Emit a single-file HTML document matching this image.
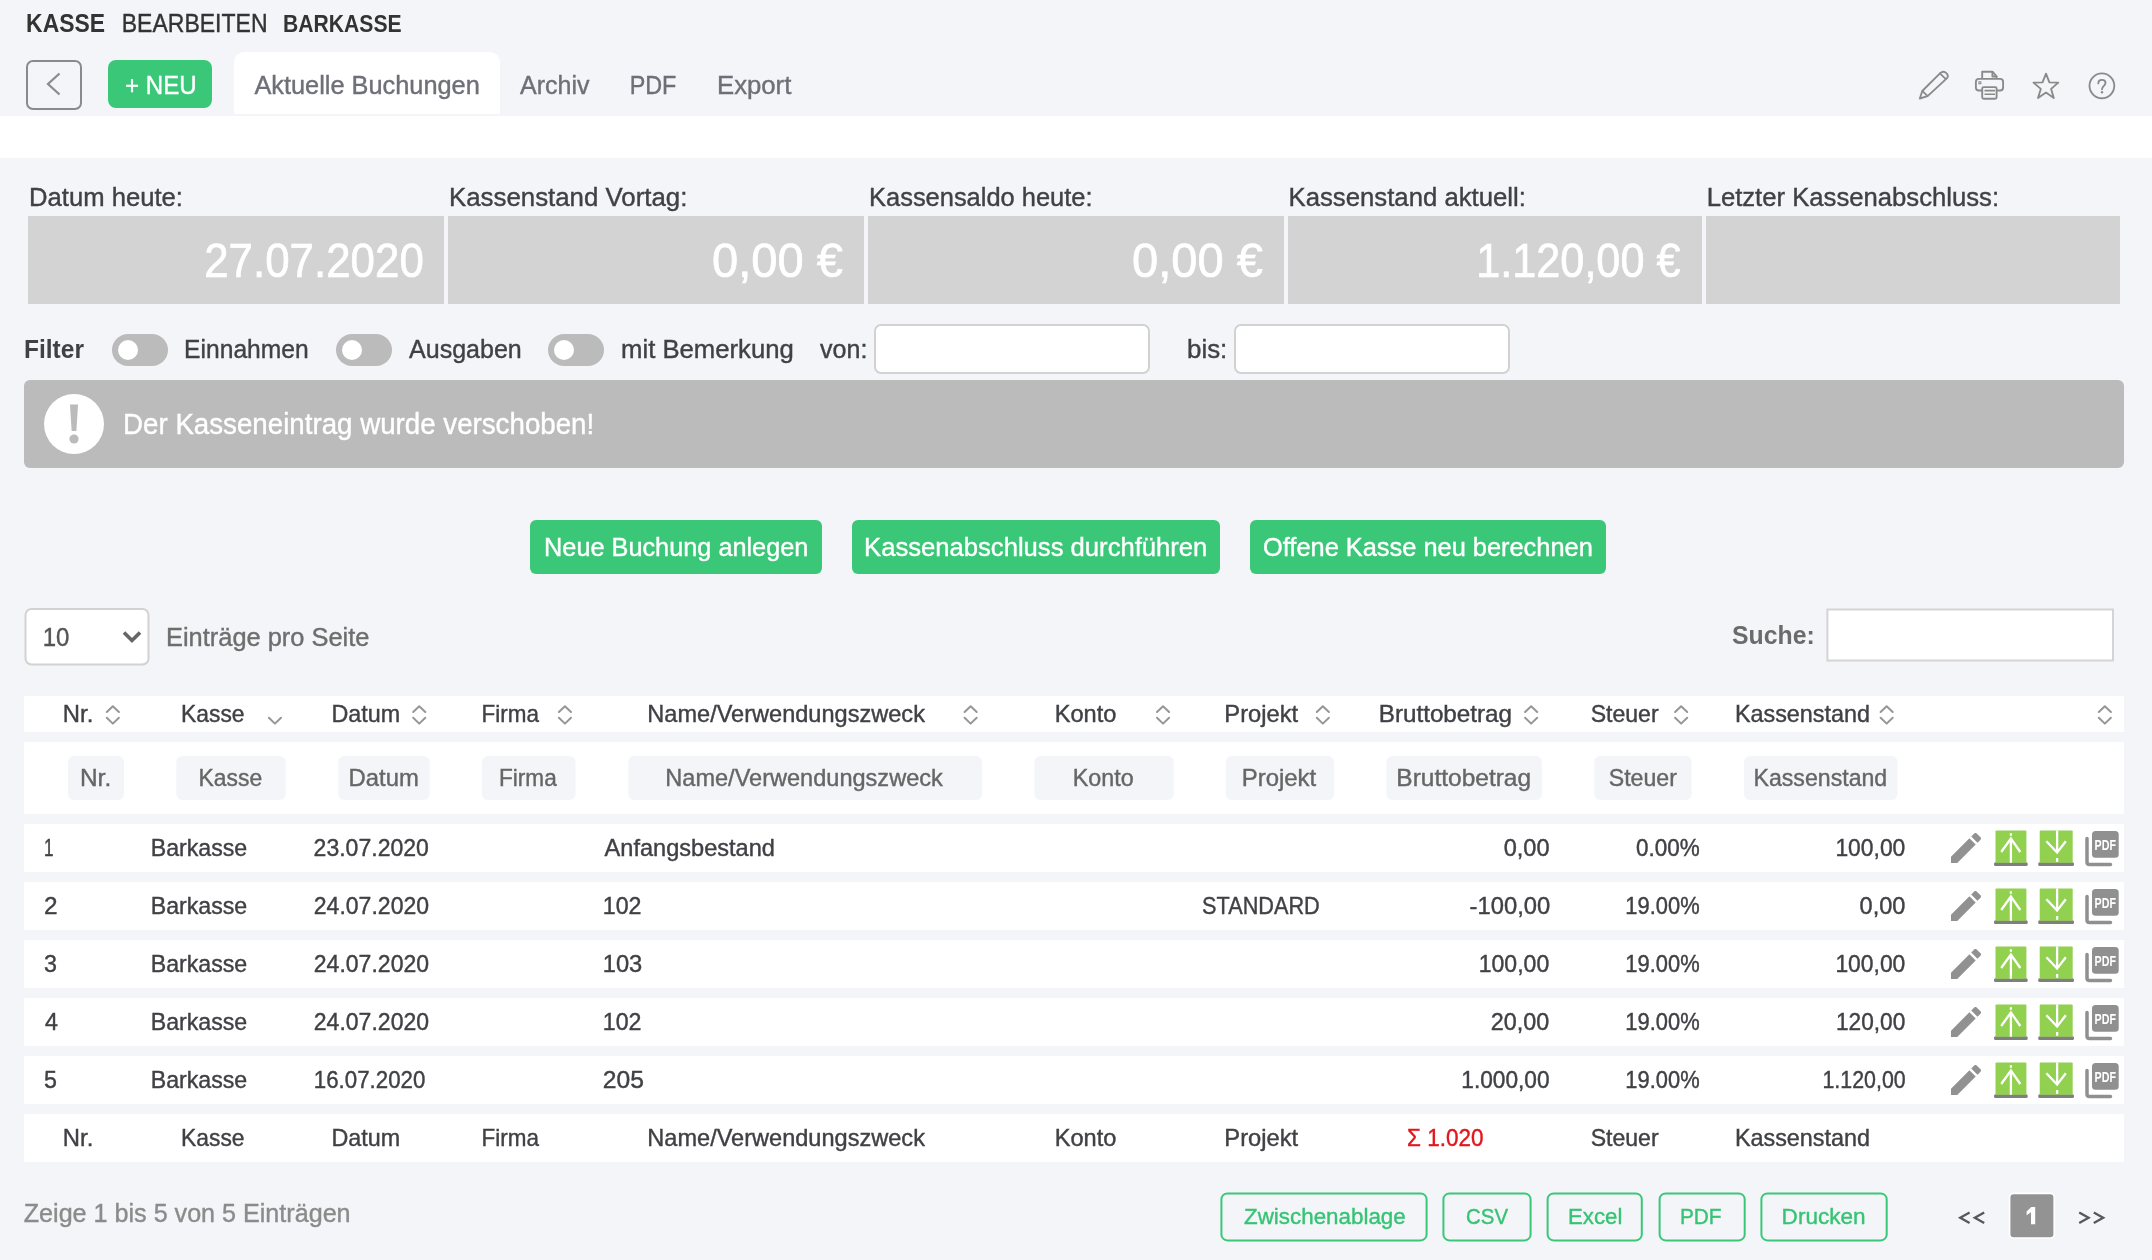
<!DOCTYPE html>
<html lang="de"><head><meta charset="utf-8"><title>Kasse bearbeiten – Barkasse</title>
<style>
html,body{margin:0;padding:0;background:#f4f5f9;overflow:hidden;}
body{font-family:"Liberation Sans",sans-serif;}
svg{display:block;width:100vw;height:auto;will-change:transform;font-family:"Liberation Sans",sans-serif;}
</style></head><body>
<svg viewBox="0 0 2152 1260" preserveAspectRatio="xMinYMin meet">
<defs><filter id="bl" x="-20%" y="-20%" width="140%" height="140%"><feGaussianBlur stdDeviation="0.55"/></filter><filter id="bl2" x="-20%" y="-20%" width="140%" height="140%"><feGaussianBlur stdDeviation="0.4"/></filter></defs>
<rect x="0" y="0" width="2152" height="1260" fill="#f4f5f9"/>
<rect x="0" y="116" width="2152" height="42" rx="0" fill="#fff" />
<path d="M234,114 V64 Q234,52 246,52 H488 Q500,52 500,64 V114 Z" fill="#fff"/>
<rect x="27" y="61" width="54" height="48" rx="6" fill="none" stroke="#8a8a8a" stroke-width="2"/>
<polyline points="59.5,73.5 48,84 59.5,94.5" fill="none" stroke="#8a8a8a" stroke-width="2.2"/>
<rect x="108" y="60" width="104" height="48" rx="8" fill="#3ac878" />
<text x="26.12" y="32" font-weight="bold" font-size="26.16" textLength="78.99" lengthAdjust="spacingAndGlyphs" fill="#333333">KASSE</text>
<text x="121.74" y="32" font-weight="normal" font-size="26.16" textLength="145.76" lengthAdjust="spacingAndGlyphs" fill="#333333" stroke="#333333" stroke-width="0.4">BEARBEITEN</text>
<text x="283.11" y="32" font-weight="bold" font-size="23.84" textLength="118.54" lengthAdjust="spacingAndGlyphs" fill="#333333">BARKASSE</text>
<text x="125.08" y="94" font-weight="normal" font-size="26.16" textLength="71.56" lengthAdjust="spacingAndGlyphs" fill="#ffffff" stroke="#ffffff" stroke-width="0.4">+ NEU</text>
<text x="254.4" y="94" font-weight="normal" font-size="25.73" textLength="225.38" lengthAdjust="spacingAndGlyphs" fill="#6f6f78" stroke="#6f6f78" stroke-width="0.4">Aktuelle Buchungen</text>
<text x="520.0" y="94" font-weight="normal" font-size="25.73" textLength="69.48" lengthAdjust="spacingAndGlyphs" fill="#6f6f78" stroke="#6f6f78" stroke-width="0.4">Archiv</text>
<text x="629.68" y="94" font-weight="normal" font-size="25.73" textLength="46.71" lengthAdjust="spacingAndGlyphs" fill="#6f6f78" stroke="#6f6f78" stroke-width="0.4">PDF</text>
<text x="717.0" y="94" font-weight="normal" font-size="25.73" textLength="74.34" lengthAdjust="spacingAndGlyphs" fill="#6f6f78" stroke="#6f6f78" stroke-width="0.4">Export</text>
<g fill="none" stroke="#8a8a8a" stroke-width="1.85" stroke-linejoin="round" stroke-linecap="round">
<path d="M1919.8,98.5 L1922.3,91 L1940.2,73.1 Q1943.5,70.2 1946.6,73.3 Q1949.4,76.4 1946,79.1 L1927.6,96.1 Z"/>
<path d="M1939.9,73.4 L1945.6,78.8 M1922.5,91.2 L1927.4,95.9"/>
<path d="M1982.2,77.5 V71.7 H1992.5 L1996.6,76.4 V77.5"/>
<path d="M1992.4,71.9 V76.5 H1996.4"/>
<rect x="1975.9" y="78.9" width="27.2" height="11.6" rx="3"/>
</g>
<rect x="1982.2" y="87.1" width="14.4" height="11.6" rx="1.5" fill="#f4f5f9" stroke="#8a8a8a" stroke-width="1.85"/>
<rect x="1978.9" y="81.8" width="2" height="2" fill="none" stroke="#8a8a8a" stroke-width="1"/>
<path d="M1984.5,90.6 H1995 M1984.5,94.2 H1995" stroke="#8a8a8a" stroke-width="1.6"/>
<g fill="none" stroke="#8a8a8a" stroke-width="1.85" stroke-linejoin="round" stroke-linecap="round">
<path d="M2046,73.6 L2049.4,82.3 L2058.3,82.6 L2051.1,88.9 L2053.8,98 L2046,92.6 L2038,98 L2040.8,88.9 L2033.5,82.6 L2042.5,82.3 Z"/>
<circle cx="2101.9" cy="85.8" r="12.4"/>
<path d="M2098.3,83.4 C2098.3,81.1 2100,79.9 2102,79.9 C2104.1,79.9 2105.5,81.3 2105.5,83.1 C2105.5,85.6 2102,86.2 2102,89.2"/>
</g>
<circle cx="2102" cy="92.3" r="1.2" fill="#8a8a8a"/>
<rect x="28" y="216" width="416" height="88" rx="0" fill="#d3d3d3" />
<rect x="448" y="216" width="416" height="88" rx="0" fill="#d3d3d3" />
<rect x="868" y="216" width="416" height="88" rx="0" fill="#d3d3d3" />
<rect x="1288" y="216" width="414" height="88" rx="0" fill="#d3d3d3" />
<rect x="1706" y="216" width="414" height="88" rx="0" fill="#d3d3d3" />
<text x="29.04" y="206" font-weight="normal" font-size="26.16" textLength="153.95" lengthAdjust="spacingAndGlyphs" fill="#404145" stroke="#404145" stroke-width="0.4">Datum heute:</text>
<text x="449.03" y="206" font-weight="normal" font-size="26.16" textLength="238.34" lengthAdjust="spacingAndGlyphs" fill="#404145" stroke="#404145" stroke-width="0.4">Kassenstand Vortag:</text>
<text x="869.05" y="206" font-weight="normal" font-size="26.16" textLength="223.46" lengthAdjust="spacingAndGlyphs" fill="#404145" stroke="#404145" stroke-width="0.4">Kassensaldo heute:</text>
<text x="1288.53" y="206" font-weight="normal" font-size="26.16" textLength="237.4" lengthAdjust="spacingAndGlyphs" fill="#404145" stroke="#404145" stroke-width="0.4">Kassenstand aktuell:</text>
<text x="1706.64" y="206" font-weight="normal" font-size="26.16" textLength="292.39" lengthAdjust="spacingAndGlyphs" fill="#404145" stroke="#404145" stroke-width="0.4">Letzter Kassenabschluss:</text>
<text x="204.19" y="277" font-weight="normal" font-size="48.55" textLength="219.6" lengthAdjust="spacingAndGlyphs" fill="#ffffff" stroke="#ffffff" stroke-width="0.7">27.07.2020</text>
<text x="712.06" y="277" font-weight="normal" font-size="48.55" textLength="130.89" lengthAdjust="spacingAndGlyphs" fill="#ffffff" stroke="#ffffff" stroke-width="0.7">0,00 €</text>
<text x="1132.06" y="277" font-weight="normal" font-size="48.55" textLength="130.89" lengthAdjust="spacingAndGlyphs" fill="#ffffff" stroke="#ffffff" stroke-width="0.7">0,00 €</text>
<text x="1476.33" y="277" font-weight="normal" font-size="48.55" textLength="204.09" lengthAdjust="spacingAndGlyphs" fill="#ffffff" stroke="#ffffff" stroke-width="0.7">1.120,00 €</text>
<rect x="112" y="334" width="56" height="32" rx="16" fill="#bbbbbb" />
<circle cx="128" cy="350" r="10" fill="#fff"/>
<rect x="336" y="334" width="56" height="32" rx="16" fill="#bbbbbb" />
<circle cx="352" cy="350" r="10" fill="#fff"/>
<rect x="548" y="334" width="56" height="32" rx="16" fill="#bbbbbb" />
<circle cx="564" cy="350" r="10" fill="#fff"/>
<text x="24.06" y="358" font-weight="bold" font-size="26.16" textLength="59.89" lengthAdjust="spacingAndGlyphs" fill="#404145">Filter</text>
<text x="184.12" y="358" font-weight="normal" font-size="26.16" textLength="124.63" lengthAdjust="spacingAndGlyphs" fill="#404145" stroke="#404145" stroke-width="0.4">Einnahmen</text>
<text x="409.0" y="358" font-weight="normal" font-size="26.16" textLength="112.78" lengthAdjust="spacingAndGlyphs" fill="#404145" stroke="#404145" stroke-width="0.4">Ausgaben</text>
<text x="621.02" y="358" font-weight="normal" font-size="26.16" textLength="172.84" lengthAdjust="spacingAndGlyphs" fill="#404145" stroke="#404145" stroke-width="0.4">mit Bemerkung</text>
<text x="820.0" y="358" font-weight="normal" font-size="26.16" textLength="47.39" lengthAdjust="spacingAndGlyphs" fill="#404145" stroke="#404145" stroke-width="0.4">von:</text>
<text x="1187.01" y="358" font-weight="normal" font-size="26.16" textLength="40.27" lengthAdjust="spacingAndGlyphs" fill="#404145" stroke="#404145" stroke-width="0.4">bis:</text>
<rect x="875" y="325" width="274" height="48" rx="6" fill="#fff" stroke="#d2d2d2" stroke-width="2"/>
<rect x="1235" y="325" width="274" height="48" rx="6" fill="#fff" stroke="#d2d2d2" stroke-width="2"/>
<rect x="24" y="380" width="2100" height="88" rx="6" fill="#bbbbbb" />
<circle cx="74" cy="424" r="30" fill="#fff"/>
<path d="M70,404.5 H78 L76.4,431 H71.6 Z" fill="#bbbbbb"/>
<circle cx="74" cy="439" r="4.6" fill="#bbbbbb"/>
<text x="123.07" y="434" font-weight="normal" font-size="28.78" textLength="471.14" lengthAdjust="spacingAndGlyphs" fill="#ffffff" stroke="#ffffff" stroke-width="0.4">Der Kasseneintrag wurde verschoben!</text>
<rect x="530" y="520" width="292" height="54" rx="6" fill="#3ac878" />
<rect x="852" y="520" width="368" height="54" rx="6" fill="#3ac878" />
<rect x="1250" y="520" width="356" height="54" rx="6" fill="#3ac878" />
<text x="544.07" y="556" font-weight="normal" font-size="26.16" textLength="264.31" lengthAdjust="spacingAndGlyphs" fill="#ffffff" stroke="#ffffff" stroke-width="0.4">Neue Buchung anlegen</text>
<text x="864.04" y="556" font-weight="normal" font-size="26.16" textLength="343.35" lengthAdjust="spacingAndGlyphs" fill="#ffffff" stroke="#ffffff" stroke-width="0.4">Kassenabschluss durchführen</text>
<text x="1263.03" y="556" font-weight="normal" font-size="26.16" textLength="329.76" lengthAdjust="spacingAndGlyphs" fill="#ffffff" stroke="#ffffff" stroke-width="0.4">Offene Kasse neu berechnen</text>
<rect x="25.5" y="609" width="123" height="55.5" rx="6" fill="#fff" stroke="#d2d2d2" stroke-width="2"/>
<polyline points="124,632.5 132,640.5 140,632.5" fill="none" stroke="#666" stroke-width="3.6"/>
<text x="42.72" y="646" font-weight="normal" font-size="25.58" textLength="26.7" lengthAdjust="spacingAndGlyphs" fill="#555555" stroke="#555555" stroke-width="0.4">10</text>
<text x="166.01" y="646" font-weight="normal" font-size="25.58" textLength="203.43" lengthAdjust="spacingAndGlyphs" fill="#6e6e6e" stroke="#6e6e6e" stroke-width="0.4">Einträge pro Seite</text>
<text x="1732.02" y="644" font-weight="bold" font-size="25.44" textLength="82.74" lengthAdjust="spacingAndGlyphs" fill="#6b6b6b">Suche:</text>
<rect x="1827.4" y="609.5" width="285.6" height="51" fill="#fff" stroke="#d4d4d4" stroke-width="2"/>
<rect x="24" y="696" width="2100" height="36" rx="0" fill="#fff" />
<rect x="24" y="742" width="2100" height="72" rx="0" fill="#fff" />
<rect x="24" y="824" width="2100" height="48" rx="0" fill="#fff" />
<rect x="24" y="882" width="2100" height="48" rx="0" fill="#fff" />
<rect x="24" y="940" width="2100" height="48" rx="0" fill="#fff" />
<rect x="24" y="998" width="2100" height="48" rx="0" fill="#fff" />
<rect x="24" y="1056" width="2100" height="48" rx="0" fill="#fff" />
<rect x="24" y="1114" width="2100" height="48" rx="0" fill="#fff" />
<text x="62.86" y="722" font-weight="normal" font-size="23.4" textLength="30.47" lengthAdjust="spacingAndGlyphs" fill="#404145" stroke="#404145" stroke-width="0.4">Nr.</text>
<text x="181.05" y="722" font-weight="normal" font-size="23.4" textLength="63.44" lengthAdjust="spacingAndGlyphs" fill="#404145" stroke="#404145" stroke-width="0.4">Kasse</text>
<text x="331.51" y="722" font-weight="normal" font-size="23.4" textLength="68.7" lengthAdjust="spacingAndGlyphs" fill="#404145" stroke="#404145" stroke-width="0.4">Datum</text>
<text x="481.58" y="722" font-weight="normal" font-size="23.4" textLength="57.41" lengthAdjust="spacingAndGlyphs" fill="#404145" stroke="#404145" stroke-width="0.4">Firma</text>
<text x="647.29" y="722" font-weight="normal" font-size="23.4" textLength="277.65" lengthAdjust="spacingAndGlyphs" fill="#404145" stroke="#404145" stroke-width="0.4">Name/Verwendungszweck</text>
<text x="1054.68" y="722" font-weight="normal" font-size="23.4" textLength="61.67" lengthAdjust="spacingAndGlyphs" fill="#404145" stroke="#404145" stroke-width="0.4">Konto</text>
<text x="1224.37" y="722" font-weight="normal" font-size="23.4" textLength="73.74" lengthAdjust="spacingAndGlyphs" fill="#404145" stroke="#404145" stroke-width="0.4">Projekt</text>
<text x="1378.73" y="722" font-weight="normal" font-size="23.4" textLength="133.33" lengthAdjust="spacingAndGlyphs" fill="#404145" stroke="#404145" stroke-width="0.4">Bruttobetrag</text>
<text x="1590.71" y="722" font-weight="normal" font-size="23.4" textLength="67.91" lengthAdjust="spacingAndGlyphs" fill="#404145" stroke="#404145" stroke-width="0.4">Steuer</text>
<text x="1734.9" y="722" font-weight="normal" font-size="23.4" textLength="135.15" lengthAdjust="spacingAndGlyphs" fill="#404145" stroke="#404145" stroke-width="0.4">Kassenstand</text>
<path d="M106.8,712.0 L112.85000000000001,706.2 L118.9,712.0 M106.8,717.8000000000001 L112.85000000000001,723.6 L118.9,717.8000000000001" fill="none" stroke="#969696" stroke-width="2" stroke-linejoin="round" stroke-linecap="round"/>
<path d="M413.20000000000005,712.0 L419.25,706.2 L425.3,712.0 M413.20000000000005,717.8000000000001 L419.25,723.6 L425.3,717.8000000000001" fill="none" stroke="#969696" stroke-width="2" stroke-linejoin="round" stroke-linecap="round"/>
<path d="M558.9,712.0 L564.9499999999999,706.2 L571.0,712.0 M558.9,717.8000000000001 L564.9499999999999,723.6 L571.0,717.8000000000001" fill="none" stroke="#969696" stroke-width="2" stroke-linejoin="round" stroke-linecap="round"/>
<path d="M964.6,712.0 L970.65,706.2 L976.7,712.0 M964.6,717.8000000000001 L970.65,723.6 L976.7,717.8000000000001" fill="none" stroke="#969696" stroke-width="2" stroke-linejoin="round" stroke-linecap="round"/>
<path d="M1157.0,712.0 L1163.0500000000002,706.2 L1169.1000000000001,712.0 M1157.0,717.8000000000001 L1163.0500000000002,723.6 L1169.1000000000001,717.8000000000001" fill="none" stroke="#969696" stroke-width="2" stroke-linejoin="round" stroke-linecap="round"/>
<path d="M1316.8,712.0 L1322.8500000000001,706.2 L1328.9,712.0 M1316.8,717.8000000000001 L1322.8500000000001,723.6 L1328.9,717.8000000000001" fill="none" stroke="#969696" stroke-width="2" stroke-linejoin="round" stroke-linecap="round"/>
<path d="M1525.1,712.0 L1531.15,706.2 L1537.2,712.0 M1525.1,717.8000000000001 L1531.15,723.6 L1537.2,717.8000000000001" fill="none" stroke="#969696" stroke-width="2" stroke-linejoin="round" stroke-linecap="round"/>
<path d="M1675.1,712.0 L1681.15,706.2 L1687.2,712.0 M1675.1,717.8000000000001 L1681.15,723.6 L1687.2,717.8000000000001" fill="none" stroke="#969696" stroke-width="2" stroke-linejoin="round" stroke-linecap="round"/>
<path d="M1880.6,712.0 L1886.65,706.2 L1892.7,712.0 M1880.6,717.8000000000001 L1886.65,723.6 L1892.7,717.8000000000001" fill="none" stroke="#969696" stroke-width="2" stroke-linejoin="round" stroke-linecap="round"/>
<path d="M2098.7999999999997,712.0 L2104.85,706.2 L2110.8999999999996,712.0 M2098.7999999999997,717.8000000000001 L2104.85,723.6 L2110.8999999999996,717.8000000000001" fill="none" stroke="#969696" stroke-width="2" stroke-linejoin="round" stroke-linecap="round"/>
<path d="M268.90000000000003,717.8000000000001 L274.95,723.6 L281.0,717.8000000000001" fill="none" stroke="#969696" stroke-width="2" stroke-linejoin="round" stroke-linecap="round"/>
<rect x="68" y="756" width="56" height="44" rx="6" fill="#f4f5f9" />
<rect x="176.3" y="756" width="109.4" height="44" rx="6" fill="#f4f5f9" />
<rect x="338.3" y="756" width="91.4" height="44" rx="6" fill="#f4f5f9" />
<rect x="482" y="756" width="93.6" height="44" rx="6" fill="#f4f5f9" />
<rect x="628.3" y="756" width="353.7" height="44" rx="6" fill="#f4f5f9" />
<rect x="1034.4" y="756" width="139.4" height="44" rx="6" fill="#f4f5f9" />
<rect x="1225.8" y="756" width="108.2" height="44" rx="6" fill="#f4f5f9" />
<rect x="1386.4" y="756" width="155.5" height="44" rx="6" fill="#f4f5f9" />
<rect x="1594.3" y="756" width="97.3" height="44" rx="6" fill="#f4f5f9" />
<rect x="1744" y="756" width="153.6" height="44" rx="6" fill="#f4f5f9" />
<text x="79.95" y="786.4" font-weight="normal" font-size="23.84" textLength="31.24" lengthAdjust="spacingAndGlyphs" fill="#666666" stroke="#666666" stroke-width="0.4">Nr.</text>
<text x="198.58" y="786.4" font-weight="normal" font-size="23.84" textLength="63.65" lengthAdjust="spacingAndGlyphs" fill="#666666" stroke="#666666" stroke-width="0.4">Kasse</text>
<text x="348.6" y="786.4" font-weight="normal" font-size="23.84" textLength="70.19" lengthAdjust="spacingAndGlyphs" fill="#666666" stroke="#666666" stroke-width="0.4">Datum</text>
<text x="499.0" y="786.4" font-weight="normal" font-size="23.84" textLength="57.79" lengthAdjust="spacingAndGlyphs" fill="#666666" stroke="#666666" stroke-width="0.4">Firma</text>
<text x="665.32" y="786.4" font-weight="normal" font-size="23.84" textLength="277.48" lengthAdjust="spacingAndGlyphs" fill="#666666" stroke="#666666" stroke-width="0.4">Name/Verwendungszweck</text>
<text x="1072.74" y="786.4" font-weight="normal" font-size="23.84" textLength="60.93" lengthAdjust="spacingAndGlyphs" fill="#666666" stroke="#666666" stroke-width="0.4">Konto</text>
<text x="1241.79" y="786.4" font-weight="normal" font-size="23.84" textLength="74.38" lengthAdjust="spacingAndGlyphs" fill="#666666" stroke="#666666" stroke-width="0.4">Projekt</text>
<text x="1396.35" y="786.4" font-weight="normal" font-size="23.84" textLength="134.73" lengthAdjust="spacingAndGlyphs" fill="#666666" stroke="#666666" stroke-width="0.4">Bruttobetrag</text>
<text x="1608.73" y="786.4" font-weight="normal" font-size="23.84" textLength="68.18" lengthAdjust="spacingAndGlyphs" fill="#666666" stroke="#666666" stroke-width="0.4">Steuer</text>
<text x="1753.46" y="786.4" font-weight="normal" font-size="23.84" textLength="133.8" lengthAdjust="spacingAndGlyphs" fill="#666666" stroke="#666666" stroke-width="0.4">Kassenstand</text>
<text x="43.96" y="856" font-weight="normal" font-size="23.26" textLength="9.53" lengthAdjust="spacingAndGlyphs" fill="#404145" stroke="#404145" stroke-width="0.4">1</text>
<text x="150.71" y="856" font-weight="normal" font-size="23.26" textLength="96.51" lengthAdjust="spacingAndGlyphs" fill="#404145" stroke="#404145" stroke-width="0.4">Barkasse</text>
<text x="313.61" y="856" font-weight="normal" font-size="23.26" textLength="115.26" lengthAdjust="spacingAndGlyphs" fill="#404145" stroke="#404145" stroke-width="0.4">23.07.2020</text>
<text x="604.6" y="856" font-weight="normal" font-size="23.26" textLength="170.28" lengthAdjust="spacingAndGlyphs" fill="#404145" stroke="#404145" stroke-width="0.4">Anfangsbestand</text>
<text x="1503.69" y="856" font-weight="normal" font-size="23.26" textLength="45.88" lengthAdjust="spacingAndGlyphs" fill="#404145" stroke="#404145" stroke-width="0.4">0,00</text>
<text x="1635.93" y="856" font-weight="normal" font-size="23.26" textLength="63.77" lengthAdjust="spacingAndGlyphs" fill="#404145" stroke="#404145" stroke-width="0.4">0.00%</text>
<text x="1835.42" y="856" font-weight="normal" font-size="23.26" textLength="69.91" lengthAdjust="spacingAndGlyphs" fill="#404145" stroke="#404145" stroke-width="0.4">100,00</text>
<path transform="translate(1946,827.9) scale(1.667)" d="M3 17.25V21h3.75L17.81 9.94l-3.75-3.75L3 17.25zM20.71 7.04c.39-.39.39-1.02 0-1.41l-2.34-2.34c-.39-.39-1.02-.39-1.41 0l-1.83 1.83 3.75 3.75 1.83-1.83z" fill="#919191"/>
<g filter="url(#bl2)">
<rect x="1994" y="862.2" width="33.7" height="3.8" rx="1.5" fill="#7f7f7f" />
<rect x="1995.5" y="830.6" width="30.9" height="32.2" rx="1" fill="#92d050" />
<path d="M2010.9,838 V862.8 M2010.9,833.2 V835.8 M2001.2,852 L2010.9,838.5 L2020.3,852" fill="none" stroke="#fff" stroke-width="2.3"/>
<rect x="2038.2" y="862.2" width="35.8" height="3.8" rx="1.5" fill="#7f7f7f" />
<rect x="2039.7" y="830.6" width="33.0" height="32.2" rx="1" fill="#92d050" />
<path d="M2057.1,830.6 V852.6 M2057.1,858 V861.8 M2046.4,841.3 L2057.1,852.6 L2065.8,841.3" fill="none" stroke="#fff" stroke-width="2.3"/>
</g>
<path d="M2087,838.5 V862 Q2087,864.6 2089.6,864.6 H2110.5" fill="none" stroke="#909090" stroke-width="3.5" stroke-linecap="round"/>
<rect x="2092" y="831.1" width="26.7" height="26.6" rx="3.5" fill="#909090" />
<text x="2094.6" y="849.8" font-weight="bold" font-size="14.5" textLength="21.4" lengthAdjust="spacingAndGlyphs" fill="#fff">PDF</text>
<text x="44.05" y="914" font-weight="normal" font-size="23.26" textLength="13.53" lengthAdjust="spacingAndGlyphs" fill="#404145" stroke="#404145" stroke-width="0.4">2</text>
<text x="150.71" y="914" font-weight="normal" font-size="23.26" textLength="96.51" lengthAdjust="spacingAndGlyphs" fill="#404145" stroke="#404145" stroke-width="0.4">Barkasse</text>
<text x="313.81" y="914" font-weight="normal" font-size="23.26" textLength="115.26" lengthAdjust="spacingAndGlyphs" fill="#404145" stroke="#404145" stroke-width="0.4">24.07.2020</text>
<text x="602.8" y="914" font-weight="normal" font-size="23.26" textLength="38.69" lengthAdjust="spacingAndGlyphs" fill="#404145" stroke="#404145" stroke-width="0.4">102</text>
<text x="1202.07" y="914" font-weight="normal" font-size="23.26" textLength="117.73" lengthAdjust="spacingAndGlyphs" fill="#404145" stroke="#404145" stroke-width="0.4">STANDARD</text>
<text x="1469.58" y="914" font-weight="normal" font-size="23.26" textLength="80.6" lengthAdjust="spacingAndGlyphs" fill="#404145" stroke="#404145" stroke-width="0.4">-100,00</text>
<text x="1625.36" y="914" font-weight="normal" font-size="23.26" textLength="74.25" lengthAdjust="spacingAndGlyphs" fill="#404145" stroke="#404145" stroke-width="0.4">19.00%</text>
<text x="1859.59" y="914" font-weight="normal" font-size="23.26" textLength="45.88" lengthAdjust="spacingAndGlyphs" fill="#404145" stroke="#404145" stroke-width="0.4">0,00</text>
<path transform="translate(1946,885.9) scale(1.667)" d="M3 17.25V21h3.75L17.81 9.94l-3.75-3.75L3 17.25zM20.71 7.04c.39-.39.39-1.02 0-1.41l-2.34-2.34c-.39-.39-1.02-.39-1.41 0l-1.83 1.83 3.75 3.75 1.83-1.83z" fill="#919191"/>
<g filter="url(#bl2)">
<rect x="1994" y="920.2" width="33.7" height="3.8" rx="1.5" fill="#7f7f7f" />
<rect x="1995.5" y="888.6" width="30.9" height="32.2" rx="1" fill="#92d050" />
<path d="M2010.9,896 V920.8 M2010.9,891.2 V893.8 M2001.2,910 L2010.9,896.5 L2020.3,910" fill="none" stroke="#fff" stroke-width="2.3"/>
<rect x="2038.2" y="920.2" width="35.8" height="3.8" rx="1.5" fill="#7f7f7f" />
<rect x="2039.7" y="888.6" width="33.0" height="32.2" rx="1" fill="#92d050" />
<path d="M2057.1,888.6 V910.6 M2057.1,916 V919.8 M2046.4,899.3 L2057.1,910.6 L2065.8,899.3" fill="none" stroke="#fff" stroke-width="2.3"/>
</g>
<path d="M2087,896.5 V920 Q2087,922.6 2089.6,922.6 H2110.5" fill="none" stroke="#909090" stroke-width="3.5" stroke-linecap="round"/>
<rect x="2092" y="889.1" width="26.7" height="26.6" rx="3.5" fill="#909090" />
<text x="2094.6" y="907.8" font-weight="bold" font-size="14.5" textLength="21.4" lengthAdjust="spacingAndGlyphs" fill="#fff">PDF</text>
<text x="44.0" y="972" font-weight="normal" font-size="23.26" textLength="12.94" lengthAdjust="spacingAndGlyphs" fill="#404145" stroke="#404145" stroke-width="0.4">3</text>
<text x="150.71" y="972" font-weight="normal" font-size="23.26" textLength="96.51" lengthAdjust="spacingAndGlyphs" fill="#404145" stroke="#404145" stroke-width="0.4">Barkasse</text>
<text x="313.81" y="972" font-weight="normal" font-size="23.26" textLength="115.26" lengthAdjust="spacingAndGlyphs" fill="#404145" stroke="#404145" stroke-width="0.4">24.07.2020</text>
<text x="602.78" y="972" font-weight="normal" font-size="23.26" textLength="39.53" lengthAdjust="spacingAndGlyphs" fill="#404145" stroke="#404145" stroke-width="0.4">103</text>
<text x="1478.71" y="972" font-weight="normal" font-size="23.26" textLength="70.52" lengthAdjust="spacingAndGlyphs" fill="#404145" stroke="#404145" stroke-width="0.4">100,00</text>
<text x="1625.36" y="972" font-weight="normal" font-size="23.26" textLength="74.25" lengthAdjust="spacingAndGlyphs" fill="#404145" stroke="#404145" stroke-width="0.4">19.00%</text>
<text x="1835.42" y="972" font-weight="normal" font-size="23.26" textLength="69.91" lengthAdjust="spacingAndGlyphs" fill="#404145" stroke="#404145" stroke-width="0.4">100,00</text>
<path transform="translate(1946,943.9) scale(1.667)" d="M3 17.25V21h3.75L17.81 9.94l-3.75-3.75L3 17.25zM20.71 7.04c.39-.39.39-1.02 0-1.41l-2.34-2.34c-.39-.39-1.02-.39-1.41 0l-1.83 1.83 3.75 3.75 1.83-1.83z" fill="#919191"/>
<g filter="url(#bl2)">
<rect x="1994" y="978.2" width="33.7" height="3.8" rx="1.5" fill="#7f7f7f" />
<rect x="1995.5" y="946.6" width="30.9" height="32.2" rx="1" fill="#92d050" />
<path d="M2010.9,954 V978.8 M2010.9,949.2 V951.8 M2001.2,968 L2010.9,954.5 L2020.3,968" fill="none" stroke="#fff" stroke-width="2.3"/>
<rect x="2038.2" y="978.2" width="35.8" height="3.8" rx="1.5" fill="#7f7f7f" />
<rect x="2039.7" y="946.6" width="33.0" height="32.2" rx="1" fill="#92d050" />
<path d="M2057.1,946.6 V968.6 M2057.1,974 V977.8 M2046.4,957.3 L2057.1,968.6 L2065.8,957.3" fill="none" stroke="#fff" stroke-width="2.3"/>
</g>
<path d="M2087,954.5 V978 Q2087,980.6 2089.6,980.6 H2110.5" fill="none" stroke="#909090" stroke-width="3.5" stroke-linecap="round"/>
<rect x="2092" y="947.1" width="26.7" height="26.6" rx="3.5" fill="#909090" />
<text x="2094.6" y="965.8" font-weight="bold" font-size="14.5" textLength="21.4" lengthAdjust="spacingAndGlyphs" fill="#fff">PDF</text>
<text x="45.0" y="1030" font-weight="normal" font-size="23.26" textLength="12.94" lengthAdjust="spacingAndGlyphs" fill="#404145" stroke="#404145" stroke-width="0.4">4</text>
<text x="150.71" y="1030" font-weight="normal" font-size="23.26" textLength="96.51" lengthAdjust="spacingAndGlyphs" fill="#404145" stroke="#404145" stroke-width="0.4">Barkasse</text>
<text x="313.81" y="1030" font-weight="normal" font-size="23.26" textLength="115.26" lengthAdjust="spacingAndGlyphs" fill="#404145" stroke="#404145" stroke-width="0.4">24.07.2020</text>
<text x="602.8" y="1030" font-weight="normal" font-size="23.26" textLength="38.69" lengthAdjust="spacingAndGlyphs" fill="#404145" stroke="#404145" stroke-width="0.4">102</text>
<text x="1490.79" y="1030" font-weight="normal" font-size="23.26" textLength="58.49" lengthAdjust="spacingAndGlyphs" fill="#404145" stroke="#404145" stroke-width="0.4">20,00</text>
<text x="1625.36" y="1030" font-weight="normal" font-size="23.26" textLength="74.25" lengthAdjust="spacingAndGlyphs" fill="#404145" stroke="#404145" stroke-width="0.4">19.00%</text>
<text x="1836.03" y="1030" font-weight="normal" font-size="23.26" textLength="69.3" lengthAdjust="spacingAndGlyphs" fill="#404145" stroke="#404145" stroke-width="0.4">120,00</text>
<path transform="translate(1946,1001.9) scale(1.667)" d="M3 17.25V21h3.75L17.81 9.94l-3.75-3.75L3 17.25zM20.71 7.04c.39-.39.39-1.02 0-1.41l-2.34-2.34c-.39-.39-1.02-.39-1.41 0l-1.83 1.83 3.75 3.75 1.83-1.83z" fill="#919191"/>
<g filter="url(#bl2)">
<rect x="1994" y="1036.2" width="33.7" height="3.8" rx="1.5" fill="#7f7f7f" />
<rect x="1995.5" y="1004.6" width="30.9" height="32.2" rx="1" fill="#92d050" />
<path d="M2010.9,1012 V1036.8 M2010.9,1007.2 V1009.8 M2001.2,1026 L2010.9,1012.5 L2020.3,1026" fill="none" stroke="#fff" stroke-width="2.3"/>
<rect x="2038.2" y="1036.2" width="35.8" height="3.8" rx="1.5" fill="#7f7f7f" />
<rect x="2039.7" y="1004.6" width="33.0" height="32.2" rx="1" fill="#92d050" />
<path d="M2057.1,1004.6 V1026.6 M2057.1,1032 V1035.8 M2046.4,1015.3 L2057.1,1026.6 L2065.8,1015.3" fill="none" stroke="#fff" stroke-width="2.3"/>
</g>
<path d="M2087,1012.5 V1036 Q2087,1038.6 2089.6,1038.6 H2110.5" fill="none" stroke="#909090" stroke-width="3.5" stroke-linecap="round"/>
<rect x="2092" y="1005.1" width="26.7" height="26.6" rx="3.5" fill="#909090" />
<text x="2094.6" y="1023.8" font-weight="bold" font-size="14.5" textLength="21.4" lengthAdjust="spacingAndGlyphs" fill="#fff">PDF</text>
<text x="44.0" y="1088" font-weight="normal" font-size="23.26" textLength="12.94" lengthAdjust="spacingAndGlyphs" fill="#404145" stroke="#404145" stroke-width="0.4">5</text>
<text x="150.71" y="1088" font-weight="normal" font-size="23.26" textLength="96.51" lengthAdjust="spacingAndGlyphs" fill="#404145" stroke="#404145" stroke-width="0.4">Barkasse</text>
<text x="313.84" y="1088" font-weight="normal" font-size="23.26" textLength="111.52" lengthAdjust="spacingAndGlyphs" fill="#404145" stroke="#404145" stroke-width="0.4">16.07.2020</text>
<text x="602.74" y="1088" font-weight="normal" font-size="23.26" textLength="41.1" lengthAdjust="spacingAndGlyphs" fill="#404145" stroke="#404145" stroke-width="0.4">205</text>
<text x="1461.32" y="1088" font-weight="normal" font-size="23.26" textLength="88.28" lengthAdjust="spacingAndGlyphs" fill="#404145" stroke="#404145" stroke-width="0.4">1.000,00</text>
<text x="1625.36" y="1088" font-weight="normal" font-size="23.26" textLength="74.25" lengthAdjust="spacingAndGlyphs" fill="#404145" stroke="#404145" stroke-width="0.4">19.00%</text>
<text x="1822.48" y="1088" font-weight="normal" font-size="23.26" textLength="83.19" lengthAdjust="spacingAndGlyphs" fill="#404145" stroke="#404145" stroke-width="0.4">1.120,00</text>
<path transform="translate(1946,1059.9) scale(1.667)" d="M3 17.25V21h3.75L17.81 9.94l-3.75-3.75L3 17.25zM20.71 7.04c.39-.39.39-1.02 0-1.41l-2.34-2.34c-.39-.39-1.02-.39-1.41 0l-1.83 1.83 3.75 3.75 1.83-1.83z" fill="#919191"/>
<g filter="url(#bl2)">
<rect x="1994" y="1094.2" width="33.7" height="3.8" rx="1.5" fill="#7f7f7f" />
<rect x="1995.5" y="1062.6" width="30.9" height="32.2" rx="1" fill="#92d050" />
<path d="M2010.9,1070 V1094.8 M2010.9,1065.2 V1067.8 M2001.2,1084 L2010.9,1070.5 L2020.3,1084" fill="none" stroke="#fff" stroke-width="2.3"/>
<rect x="2038.2" y="1094.2" width="35.8" height="3.8" rx="1.5" fill="#7f7f7f" />
<rect x="2039.7" y="1062.6" width="33.0" height="32.2" rx="1" fill="#92d050" />
<path d="M2057.1,1062.6 V1084.6 M2057.1,1090 V1093.8 M2046.4,1073.3 L2057.1,1084.6 L2065.8,1073.3" fill="none" stroke="#fff" stroke-width="2.3"/>
</g>
<path d="M2087,1070.5 V1094 Q2087,1096.6 2089.6,1096.6 H2110.5" fill="none" stroke="#909090" stroke-width="3.5" stroke-linecap="round"/>
<rect x="2092" y="1063.1" width="26.7" height="26.6" rx="3.5" fill="#909090" />
<text x="2094.6" y="1081.8" font-weight="bold" font-size="14.5" textLength="21.4" lengthAdjust="spacingAndGlyphs" fill="#fff">PDF</text>
<text x="62.86" y="1146" font-weight="normal" font-size="23.4" textLength="30.47" lengthAdjust="spacingAndGlyphs" fill="#404145" stroke="#404145" stroke-width="0.4">Nr.</text>
<text x="181.05" y="1146" font-weight="normal" font-size="23.4" textLength="63.44" lengthAdjust="spacingAndGlyphs" fill="#404145" stroke="#404145" stroke-width="0.4">Kasse</text>
<text x="331.51" y="1146" font-weight="normal" font-size="23.4" textLength="68.7" lengthAdjust="spacingAndGlyphs" fill="#404145" stroke="#404145" stroke-width="0.4">Datum</text>
<text x="481.58" y="1146" font-weight="normal" font-size="23.4" textLength="57.41" lengthAdjust="spacingAndGlyphs" fill="#404145" stroke="#404145" stroke-width="0.4">Firma</text>
<text x="647.29" y="1146" font-weight="normal" font-size="23.4" textLength="277.65" lengthAdjust="spacingAndGlyphs" fill="#404145" stroke="#404145" stroke-width="0.4">Name/Verwendungszweck</text>
<text x="1054.68" y="1146" font-weight="normal" font-size="23.4" textLength="61.67" lengthAdjust="spacingAndGlyphs" fill="#404145" stroke="#404145" stroke-width="0.4">Konto</text>
<text x="1224.37" y="1146" font-weight="normal" font-size="23.4" textLength="73.74" lengthAdjust="spacingAndGlyphs" fill="#404145" stroke="#404145" stroke-width="0.4">Projekt</text>
<text x="1590.71" y="1146" font-weight="normal" font-size="23.4" textLength="67.91" lengthAdjust="spacingAndGlyphs" fill="#404145" stroke="#404145" stroke-width="0.4">Steuer</text>
<text x="1734.9" y="1146" font-weight="normal" font-size="23.4" textLength="135.15" lengthAdjust="spacingAndGlyphs" fill="#404145" stroke="#404145" stroke-width="0.4">Kassenstand</text>
<text x="1407.04" y="1146" font-weight="normal" font-size="23.4" textLength="76.44" lengthAdjust="spacingAndGlyphs" fill="#e3161c" stroke="#e3161c" stroke-width="0.4">Σ 1.020</text>
<text x="23.74" y="1222" font-weight="normal" font-size="26.16" textLength="326.86" lengthAdjust="spacingAndGlyphs" fill="#8b8b8b" stroke="#8b8b8b" stroke-width="0.4">Zeige 1 bis 5 von 5 Einträgen</text>
<rect x="1221.4" y="1193.4" width="205.2" height="47" rx="6" fill="none" stroke="#3ac878" stroke-width="2"/>
<rect x="1443.4" y="1193.4" width="87.2" height="47" rx="6" fill="none" stroke="#3ac878" stroke-width="2"/>
<rect x="1547.6" y="1193.4" width="94.2" height="47" rx="6" fill="none" stroke="#3ac878" stroke-width="2"/>
<rect x="1659.6" y="1193.4" width="85.1" height="47" rx="6" fill="none" stroke="#3ac878" stroke-width="2"/>
<rect x="1761.4" y="1193.4" width="125.3" height="47" rx="6" fill="none" stroke="#3ac878" stroke-width="2"/>
<text x="1244.0" y="1223.6" font-weight="normal" font-size="22.67" textLength="161.73" lengthAdjust="spacingAndGlyphs" fill="#36c474" stroke="#36c474" stroke-width="0.4">Zwischenablage</text>
<text x="1466.1" y="1223.6" font-weight="normal" font-size="22.67" textLength="41.93" lengthAdjust="spacingAndGlyphs" fill="#36c474" stroke="#36c474" stroke-width="0.4">CSV</text>
<text x="1568.04" y="1223.6" font-weight="normal" font-size="22.67" textLength="54.34" lengthAdjust="spacingAndGlyphs" fill="#36c474" stroke="#36c474" stroke-width="0.4">Excel</text>
<text x="1679.96" y="1223.6" font-weight="normal" font-size="22.67" textLength="41.62" lengthAdjust="spacingAndGlyphs" fill="#36c474" stroke="#36c474" stroke-width="0.4">PDF</text>
<text x="1781.61" y="1223.6" font-weight="normal" font-size="22.67" textLength="83.96" lengthAdjust="spacingAndGlyphs" fill="#36c474" stroke="#36c474" stroke-width="0.4">Drucken</text>
<path d="M1969.6,1212.5 L1960.2,1217.8 L1969.6,1223.1 M1984.2,1212.5 L1974.8,1217.8 L1984.2,1223.1" fill="none" stroke="#585858" stroke-width="2.3"/>
<path d="M2079.2,1212.5 L2088.6,1217.8 L2079.2,1223.1 M2093.8,1212.5 L2103.2,1217.8 L2093.8,1223.1" fill="none" stroke="#585858" stroke-width="2.3"/>
<rect x="2009.6" y="1193.4" width="44.6" height="44.6" rx="4" fill="#939393" stroke="#fff" stroke-width="1.6"/>
<path d="M2026.6,1211.4 L2031.3,1207 H2035.2 V1224.3 H2031 V1212.3 L2026.6,1215.2 Z" fill="#fff"/>
</svg>
</body></html>
